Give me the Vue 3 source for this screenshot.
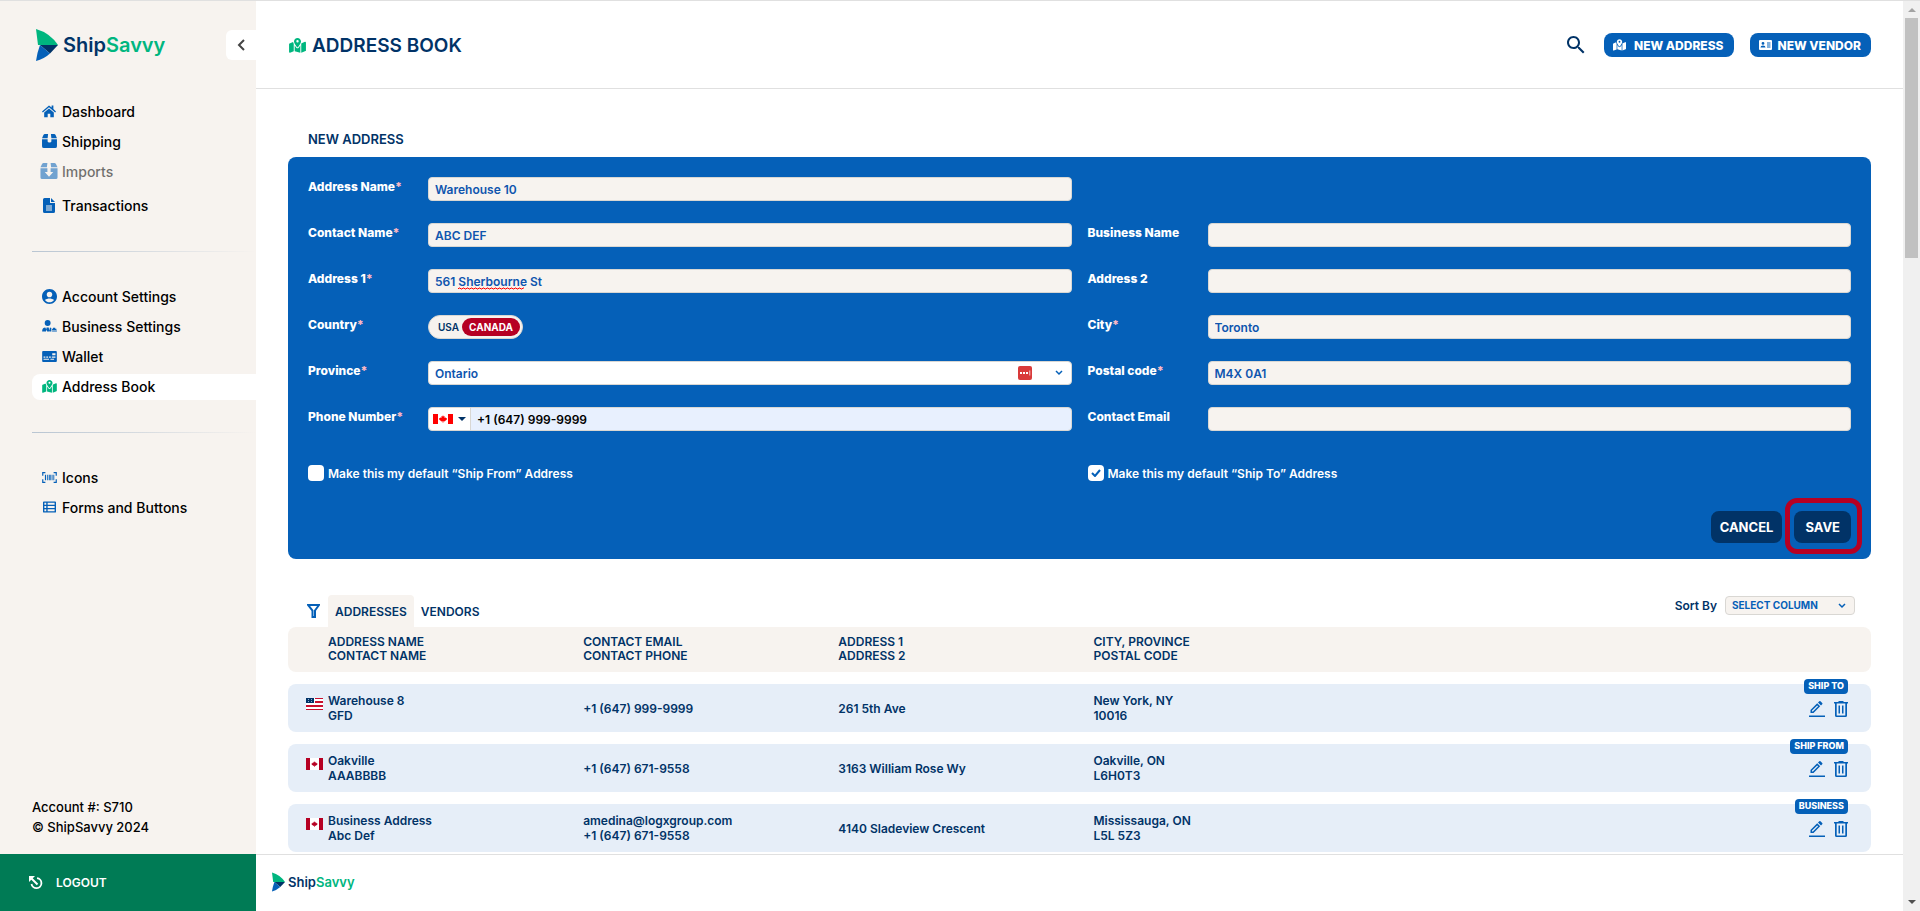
<script setup>
import { ref } from 'vue'

const MAP =
  'M408 120c0 54.6-73.1 151.9-105.2 192c-7.7 9.6-22 9.6-29.6 0C241.1 271.9 168 174.6 168 120C168 53.7 221.7 0 288 0s120 53.7 120 120zm8 80.4c3.5-6.9 6.7-13.8 9.6-20.6c.5-1.2 1-2.5 1.5-3.7l116-46.4C558.9 123.4 576 135 576 152V422.8c0 9.8-6 18.6-15.1 22.3L416 503V200.4zM137.6 138.3c2.4 14.1 7.2 28.3 12.8 41.5c2.9 6.8 6.1 13.7 9.6 20.6V451.8L32.9 502.7C17.1 509 0 497.4 0 480.4V209.6c0-9.8 6-18.6 15.1-22.3l122.6-49zM327.8 332c13.9-17.4 35.7-45.7 56.2-77V504.3L192 449.4V255c20.5 31.3 42.3 59.6 56.2 77c20.5 25.6 59.1 25.6 79.6 0zM288 152a40 40 0 1 0 0-80 40 40 0 1 0 0 80z'
const LEAF =
  'M8 0l1 3 2-1 0 4 2-2 0 2 3 0-1 2 1 1-4 3 0 1-3-1 0 3-2 0 0-3-3 1 0-1-4-3 1-1-1-2 3 0 0-2 2 2 0-4 2 1z'

const icons = {
  home: { box: '0 0 16 14', w: 14, h: 13, d: 'M8 0L0 7l1 1 7-6 7 6 1-1-3-3V0h-2v2.500zM8 3.500L2.500 8v5.500h4V9.500h3v4h4V8z' },
  box: { box: '0 0 16 15', w: 15, h: 14, d: 'M3 0h3.500L6 4.500H0L1.500 1Q2 0 3 0zM9.500 0H13q1 0 1.500 1L16 4.500h-6zM0 5.500h6V8q0 1 2 1t2-1V5.500h6V13q0 2-2 2H2q-2 0-2-2z' },
  imports: { box: '0 0 16 15', w: 18, h: 16, d: 'M3 0h3.500L6 4H0L1.500 1Q2 0 3 0zM9.500 0H13q1 0 1.500 1L16 4h-6zM0 5h6.500v3.500H4L8 13l4-4.500H9.500V5H16v8.500q0 1.500-1.500 1.500h-13Q0 15 0 13.500z' },
  file: { box: '0 0 12 15', w: 12, h: 15, d: 'M1.500 0H7v5h5v8.500q0 1.500-1.500 1.500h-9Q0 15 0 13.500v-12Q0 0 1.500 0zM8 0l4 4H8zM3 7.500v1h6v-1zM3 9.500v1h6v-1zM3 11.500v1h6v-1z' },
  account: { box: '2 2 20 20', w: 15, h: 15, d: 'M12 2C6.480 2 2 6.480 2 12s4.480 10 10 10 10-4.480 10-10S17.520 2 12 2zm0 3.500c2.200 0 3.700 1.600 3.700 3.700S14.200 13 12 13 8.300 11.400 8.300 9.200 9.800 5.500 12 5.500zm0 14.300c-2.300 0-4.600-1-6-3.100 1.500-1.300 3.700-2 6-2s4.500.7 6 2c-1.400 2.100-3.700 3.100-6 3.100z' },
  business: { box: '0 0 16 13', w: 15, h: 12, d: 'M6 0a3 3 0 0 1 0 6.400A3 3 0 0 1 6 0zM0 12.500q0-4.500 3.500-4.500L5.500 12.500zM4.800 8h2.400l.6 4.500H4.200zM8.500 8q.8 0 1.500.6V12.500H7.500zM10.800 9.500h1V8.300h2.400v1.200h1.300v1.200h-4.700zM10.800 11.300H16v1.200h-5.200z' },
  wallet: { box: '0 0 16 12', w: 15, h: 11, d: 'M1 0h14q1 0 1 1v10q0 1-1 1H1q-1 0-1-1V1q0-1 1-1zM11 2.500v2.200h3.500V2.500zM1.500 6v1.300h2V6zM4.500 6v1.300h2V6zM7.500 6v1.300h2V6zM10.500 6v1.300h4V6zM1.500 8.500v1h6v-1zM9 8.500v1h4v-1z' },
  map: { box: '0 0 576 512', w: 15, h: 13, d: MAP },
  barcode: { box: '0 0 16 12', w: 15, h: 11, d: 'M0 0h3.500v1.300H1.300V4H0zM12.500 0H16v4h-1.300V1.300h-2.200zM0 8h1.300v2.700h2.200V12H0zM14.700 8H16v4h-3.500v-1.300h2.200zM3 3h1.300v6H3zM5.500 3h1.200v6H5.500zM7.700 3h1.600v6H7.700zM10.300 3h1v6h-1zM12.200 3h1v6h-1z' },
  list: { box: '0 0 14 12', w: 13, h: 12, d: 'M1 0h12q1 0 1 1v10q0 1-1 1H1q-1 0-1-1V1q0-1 1-1zM1.500 1.500v2h2v-2zM5 1.500v2h7.500v-2zM1.500 5v2h2V5zM5 5v2h7.500V5zM1.500 8.500v2h2v-2zM5 8.500v2h7.500v-2z' },
}

const groups = [
  [
    { text: 'Dashboard', icon: 'home' },
    { text: 'Shipping', icon: 'box' },
    { text: 'Imports', icon: 'imports', muted: true },
    { text: 'Transactions', icon: 'file' },
  ],
  [
    { text: 'Account Settings', icon: 'account' },
    { text: 'Business Settings', icon: 'business' },
    { text: 'Wallet', icon: 'wallet' },
    { text: 'Address Book', icon: 'map', active: true },
  ],
  [
    { text: 'Icons', icon: 'barcode' },
    { text: 'Forms and Buttons', icon: 'list' },
  ],
]

const form = ref({
  name: 'Warehouse 10',
  contact: 'ABC DEF',
  business: '',
  address1: '561 Sherbourne St',
  address2: '',
  country: 'CANADA',
  city: 'Toronto',
  province: 'Ontario',
  postal: 'M4X 0A1',
  phone: '+1 (647) 999-9999',
  email: '',
  shipFrom: false,
  shipTo: true,
})

const fields = [
  { id: 'name', label: 'Address Name', required: true, wide: true },
  { id: 'contact', label: 'Contact Name', required: true },
  { id: 'business', label: 'Business Name' },
  { id: 'address1', label: 'Address 1', required: true },
  { id: 'address2', label: 'Address 2' },
  { id: 'country', label: 'Country', required: true },
  { id: 'city', label: 'City', required: true },
  { id: 'province', label: 'Province', required: true },
  { id: 'postal', label: 'Postal code', required: true },
  { id: 'phone', label: 'Phone Number', required: true },
  { id: 'email', label: 'Contact Email' },
]

const heads = [
  ['ADDRESS NAME', 'CONTACT NAME'],
  ['CONTACT EMAIL', 'CONTACT PHONE'],
  ['ADDRESS 1', 'ADDRESS 2'],
  ['CITY, PROVINCE', 'POSTAL CODE'],
]
const rows = [
  { flag: 'us', tag: 'SHIP TO', cells: [['Warehouse 8', 'GFD'], ['+1 (647) 999-9999'], ['261 5th Ave'], ['New York, NY', '10016']] },
  { flag: 'ca', tag: 'SHIP FROM', cells: [['Oakville', 'AAABBBB'], ['+1 (647) 671-9558'], ['3163 William Rose Wy'], ['Oakville, ON', 'L6H0T3']] },
  { flag: 'ca', tag: 'BUSINESS', cells: [['Business Address', 'Abc Def'], ['amedina@logxgroup.com', '+1 (647) 671-9558'], ['4140 Sladeview Crescent'], ['Mississauga, ON', 'L5L 5Z3']] },
]
</script>

<template>
  <div class="app">
    <aside class="side">
      <div class="side-top">
        <div class="logo">
          <svg class="mark" viewBox="0 0 22 32" aria-hidden="true">
            <path d="M0 0Q14 4 22 16H2Q1 8 0 0z" fill="#00b67f" />
            <path d="M4 16h18l-8 8.500z" fill="#013367" />
            <path d="M4 16l10 8.500Q8 30 0 32 1 24 4 16z" fill="#0560b8" />
          </svg>
          <span>Ship<b>Savvy</b></span>
        </div>
        <button class="collapse" aria-label="Collapse menu">
          <svg width="8" height="12" viewBox="0 0 8 12"><path d="M7 1L2 6l5 5" fill="none" stroke="#444" stroke-width="2" /></svg>
        </button>
      </div>
      <nav>
        <div v-for="(group, g) in groups" :key="g" class="group">
          <a v-for="item in group" :key="item.text" href="#" class="item" :class="{ active: item.active, muted: item.muted }">
            <span class="ico">
              <svg :width="icons[item.icon].w" :height="icons[item.icon].h" :viewBox="icons[item.icon].box" aria-hidden="true">
                <path :d="icons[item.icon].d" fill="currentColor" fill-rule="evenodd" />
              </svg>
            </span>
            {{ item.text }}
          </a>
        </div>
      </nav>
      <div class="info">
        <div>Account #: S710</div>
        <div>© ShipSavvy 2024</div>
      </div>
      <button class="logout">
        <svg width="14" height="14" viewBox="0 0 14 14" fill="none" stroke="currentColor" aria-hidden="true">
          <path d="M8 2.200A5 5 0 1 1 2.500 8" stroke-width="1.800" />
          <path d="M1 1l7.500 7.500" stroke-width="2" />
          <path d="M0 0h6L0 6z" fill="currentColor" stroke="none" />
        </svg>
        LOGOUT
      </button>
    </aside>

    <div class="main">
      <header class="head">
        <h1>
          <svg width="17" height="15" viewBox="0 0 576 512" aria-hidden="true"><path :d="MAP" fill="#00b67f" /></svg>
          ADDRESS BOOK
        </h1>
        <div class="head-actions">
          <button class="search" aria-label="Search">
            <svg width="24" height="24" viewBox="0 0 24 24">
              <path fill="#013367" d="M15.500 14h-.79l-.28-.27C15.410 12.590 16 11.110 16 9.500 16 5.910 13.090 3 9.500 3S3 5.910 3 9.500 5.910 16 9.500 16c1.610 0 3.090-.59 4.230-1.570l.27.28v.79l5 4.990L20.490 19l-4.990-5zm-6 0C7.010 14 5 11.990 5 9.500S7.010 5 9.500 5 14 7.010 14 9.500 11.990 14 9.500 14z" />
            </svg>
          </button>
          <button class="pill address">
            <svg width="13" height="12" viewBox="0 0 576 512" aria-hidden="true"><path :d="MAP" fill="#fff" /></svg>
            NEW ADDRESS
          </button>
          <button class="pill vendor">
            <svg width="13" height="10" viewBox="0 0 13 10" aria-hidden="true">
              <path fill="#fff" fill-rule="evenodd" d="M1 0h11q1 0 1 1v8q0 1-1 1H1Q0 10 0 9V1q0-1 1-1zM4 2a1.400 1.400 0 0 0 0 2.800A1.400 1.400 0 0 0 4 2zM1.500 7.500h5Q6.500 5.500 4 5.500T1.500 7.500zM8 2.500v1h3.500v-1zM8 4.500v1h3.500v-1zM8 6.500v1h3.500v-1z" />
            </svg>
            NEW VENDOR
          </button>
        </div>
      </header>

      <main class="content">
        <h2>NEW ADDRESS</h2>
        <form class="panel" @submit.prevent>
          <div class="fields">
            <div v-for="f in fields" :key="f.id" class="field" :class="{ solo: f.wide }">
              <label :for="f.id" class="label">{{ f.label }}<i v-if="f.required">*</i></label>
              <div v-if="f.id === 'country'" class="switch" role="radiogroup" aria-label="Country">
                <label v-for="c in ['USA', 'CANADA']" :key="c" :class="{ on: form.country === c }">
                  <input :id="c === 'CANADA' ? 'country' : 'country-usa'" v-model="form.country" type="radio" name="country" :value="c" />{{ c }}
                </label>
              </div>
              <div v-else-if="f.id === 'province'" class="control">
                <select id="province" v-model="form.province" class="input white"><option>Ontario</option></select>
                <svg class="vault" width="14" height="14" viewBox="0 0 14 14" aria-hidden="true">
                  <rect width="14" height="14" rx="2" fill="#d93a3a" />
                  <path d="M2 6h2v2H2zM5 6h2v2H5zM8 6h2v2H8zM11.500 4.500h.7v5h-.7z" fill="#fff" />
                </svg>
                <svg class="chev" width="8" height="6" viewBox="0 0 8 6" aria-hidden="true"><path d="M1 1l3 3 3-3" fill="none" stroke="#0560b8" stroke-width="1.500" /></svg>
              </div>
              <div v-else-if="f.id === 'phone'" class="control phone">
                <button type="button" class="dial" aria-label="Country code">
                  <svg width="20" height="10" viewBox="0 0 20 10" aria-hidden="true">
                    <path d="M0 0h5v10H0zM15 0h5v10h-5z" fill="#f00" />
                    <svg x="6" y="1" width="8" height="8" viewBox="0 0 16 16"><path :d="LEAF" fill="#f00" /></svg>
                  </svg>
                  <svg width="8" height="4" viewBox="0 0 8 4" aria-hidden="true"><path d="M0 0h8L4 4z" fill="#013367" /></svg>
                </button>
                <input id="phone" v-model="form.phone" class="input auto" type="tel" />
              </div>
              <div v-else class="control">
                <input :id="f.id" v-model="form[f.id]" class="input" type="text" />
                <svg v-if="f.id === 'address1'" class="squiggle" width="66" height="3" viewBox="0 0 66 3" aria-hidden="true">
                  <path :d="'M0 2' + 'l1-1 1 0 1 1 1 0'.repeat(17)" fill="none" stroke="#f00" />
                </svg>
              </div>
            </div>
          </div>
          <div class="checks">
            <label class="check"><input v-model="form.shipFrom" type="checkbox" />Make this my default “Ship From” Address</label>
            <label class="check"><input v-model="form.shipTo" type="checkbox" />Make this my default “Ship To” Address
              <svg v-if="form.shipTo" class="tick" width="10" height="8" viewBox="0 0 10 8" aria-hidden="true"><path d="M1 4l3 3 5-6" fill="none" stroke="#0560b8" stroke-width="2" /></svg>
            </label>
          </div>
          <div class="buttons">
            <button type="button" class="dark">CANCEL</button>
            <div class="save"><button class="dark">SAVE</button><span class="ring"></span></div>
          </div>
        </form>

        <div class="bar">
          <button class="filter" aria-label="Filter">
            <svg width="13" height="14" viewBox="0 0 13 14"><path d="M1 1h11L8 6.500V13H5.500V6.500z" fill="none" stroke="#0560b8" stroke-width="2" /></svg>
          </button>
          <button class="tab on">ADDRESSES</button>
          <button class="tab">VENDORS</button>
          <div class="sort">
            <label for="sort">Sort By</label>
            <div class="control">
              <select id="sort" class="input small"><option>SELECT COLUMN</option></select>
              <svg class="chev" width="8" height="6" viewBox="0 0 8 6" aria-hidden="true"><path d="M1 1l3 3 3-3" fill="none" stroke="#0560b8" stroke-width="1.500" /></svg>
            </div>
          </div>
        </div>

        <table>
          <colgroup><col class="c-flag" /><col span="6" /><col class="c-end" /></colgroup>
          <thead>
            <tr>
              <th></th>
              <th v-for="h in heads" :key="h[0]" scope="col"><div v-for="l in h" :key="l">{{ l }}</div></th>
              <th colspan="3"></th>
            </tr>
          </thead>
          <tbody>
            <tr v-for="r in rows" :key="r.tag">
              <td class="flag">
                <svg v-if="r.flag === 'us'" width="17" height="12" viewBox="0 0 17 12" role="img" aria-label="USA">
                  <rect width="17" height="12" fill="#fff" />
                  <path d="M9 0h8v1H9zM9 3h8v2H9zM0 7h17v2H0zM0 11h17v1H0z" fill="#c8102e" />
                  <path d="M0 0h8v5H0z" fill="#013367" />
                  <path d="M2 1h1v1H2zM5 1h1v1H5zM2 3h1v1H2zM5 3h1v1H5z" fill="#8fb0d4" />
                </svg>
                <svg v-else width="17" height="12" viewBox="0 0 17 12" role="img" aria-label="Canada">
                  <rect width="17" height="12" fill="#fff" />
                  <path d="M0 0h4v12H0zM13 0h4v12h-4z" fill="#b60023" />
                  <svg x="5" y="3" width="7" height="6" viewBox="0 0 16 16"><path :d="LEAF" fill="#b60023" /></svg>
                </svg>
              </td>
              <td v-for="(c, i) in r.cells" :key="i"><div v-for="l in c" :key="l">{{ l }}</div></td>
              <td colspan="3" class="actions">
                <span class="tag">{{ r.tag }}</span>
                <div class="tools">
                  <button aria-label="Edit">
                    <svg width="16" height="16" viewBox="0 0 16 16">
                      <path fill="#0560b8" fill-rule="evenodd" d="M0 14.500h16V16H0zM1.500 12V9l6.700-6.700 3 3L4.500 12zM3 10.500h.9L9.100 5.300l-.9-.9L3 9.600zM9 1.500L10.300.3q.6-.6 1.200 0l1.700 1.700q.6.6 0 1.200L12 4.500z" />
                    </svg>
                  </button>
                  <button aria-label="Delete">
                    <svg width="14" height="16" viewBox="0 0 14 16">
                      <path fill="#0560b8" fill-rule="evenodd" d="M4.500 0h5v1H14v1.600h-1V14.500q0 1.500-1.500 1.500h-9Q1 16 1 14.500V2.600H0V1h4.500zM2.700 2.600v11.800h8.600V2.600zM4.500 4.500H6v8H4.500zM8 4.500h1.500v8H8z" />
                    </svg>
                  </button>
                </div>
              </td>
            </tr>
          </tbody>
        </table>
      </main>

      <footer class="foot">
        <div class="logo mini">
          <svg class="mark" viewBox="0 0 22 32" aria-hidden="true">
            <path d="M0 0Q14 4 22 16H2Q1 8 0 0z" fill="#00b67f" />
            <path d="M4 16h18l-8 8.500z" fill="#013367" />
            <path d="M4 16l10 8.500Q8 30 0 32 1 24 4 16z" fill="#0560b8" />
          </svg>
          <span>Ship<b>Savvy</b></span>
        </div>
      </footer>
    </div>

    <div class="scroll" aria-hidden="true">
      <svg width="8" height="4" viewBox="0 0 8 4"><path d="M0 4h8L4 0z" fill="#a3a3a3" /></svg>
      <div class="thumb"></div>
      <svg class="down" width="8" height="4" viewBox="0 0 8 4"><path d="M0 0h8L4 4z" fill="#505050" /></svg>
    </div>
  </div>
</template>

<style>
body {
  margin: 0;
}
</style>

<style scoped>
* {
  box-sizing: border-box;
}
.app {
  display: grid;
  grid-template-columns: 256px 1fr 17px;
  height: 100vh;
  border-top: 1px solid #e0e0e0;
  background: #fff;
  color: #013367;
  font: 600 12px/15px Inter, 'Open Sans', sans-serif;
}
button {
  border: 0;
  padding: 0;
  background: none;
  color: inherit;
  font: inherit;
}
svg {
  display: block;
  flex: none;
}
.side {
  display: flex;
  flex-direction: column;
  min-width: 0;
  background: #f7f3ef;
  color: #000;
  font-weight: 500;
}
.side-top {
  display: flex;
  align-items: center;
  justify-content: space-between;
  height: 60px;
  margin-bottom: 38px;
  padding: 28px 0 0 36px;
}
.logo {
  display: flex;
  align-items: center;
  gap: 5px;
  color: #013367;
  font-size: 20px;
  line-height: 32px;
  font-weight: 600;
}
.logo b {
  color: #00b67f;
  font-weight: 600;
}
.mark {
  width: 22px;
  height: 32px;
}
.mini {
  font-size: 13px;
  line-height: 20px;
  gap: 3px;
}
.mini .mark {
  width: 13px;
  height: 20px;
}
.collapse {
  display: flex;
  align-items: center;
  justify-content: center;
  width: 30px;
  height: 30px;
  border-radius: 6px 0 0 6px;
  background: #fff;
}
nav {
  padding-left: 32px;
}
.group + .group {
  margin-top: 32px;
}
.group + .group::before {
  content: '';
  display: block;
  height: 1px;
  margin-bottom: 32px;
  background: linear-gradient(90deg, #b9c5d2, #f7f3ef);
}
.item {
  display: flex;
  align-items: center;
  gap: 4px;
  height: 26px;
  padding: 0 0 2px 8px;
  border-radius: 8px 0 0 8px;
  color: #000;
  font-size: 14px;
  text-decoration: none;
}
.item + .item {
  margin-top: 4px;
}
.item.muted {
  opacity: 0.55;
}
.item.muted + .item {
  margin-top: 8px;
}
.item.active {
  background: #fff;
}
.ico {
  display: flex;
  justify-content: center;
  width: 18px;
  color: #0560b8;
}
.active .ico {
  color: #00b67f;
}
.info {
  margin-top: auto;
  padding: 0 0 17px 32px;
  font-size: 13px;
  line-height: 20px;
}
.logout {
  display: flex;
  align-items: center;
  gap: 13px;
  height: 57px;
  padding-left: 29px;
  background: #007b55;
  color: #fff;
  font-weight: 600;
}
.main {
  display: flex;
  flex-direction: column;
  min-width: 0;
  min-height: 0;
}
.head {
  display: flex;
  flex: none;
  justify-content: space-between;
  height: 88px;
  padding: 32px 32px 0 33px;
  border-bottom: 1px solid #e0e0e0;
}
h1 {
  display: flex;
  gap: 6px;
  align-items: center;
  height: 24px;
  margin: 0;
  font-size: 19px;
  font-weight: 600;
}
.head-actions {
  display: flex;
  gap: 16px;
  height: 24px;
}
.pill {
  display: flex;
  align-items: center;
  height: 24px;
  padding: 0 10px 0 9px;
  border-radius: 8px;
  background: #0560b8;
  color: #fff;
  font-weight: 800;
}
.address {
  gap: 8px;
}
.vendor {
  gap: 6px;
}
.content {
  flex: 1;
  min-height: 0;
  overflow: hidden;
  padding: 40px 32px 0;
}
h2 {
  margin: 0 20px 8px;
  font-size: 13px;
  line-height: 20px;
  font-weight: 600;
}
.panel {
  padding: 20px 20px 16px;
  border-radius: 8px;
  background: #0560b8;
  color: #fff;
}
.fields {
  display: grid;
  grid-template-columns: 1fr 1fr;
  gap: 22px 16px;
}
.field {
  display: grid;
  grid-template-columns: 120px 1fr;
  height: 24px;
}
.field.solo {
  margin-right: calc(50% + 8px);
  grid-column: 1 / -1;
}
.label {
  line-height: 20px;
  font-weight: 800;
}
.label i {
  color: #ffb9c4;
  font-style: normal;
}
.control {
  position: relative;
  display: flex;
  min-width: 0;
}
.input {
  appearance: none;
  flex: 1;
  min-width: 0;
  height: 24px;
  margin: 0;
  padding: 0 6px;
  border: 1px solid #d9d7d3;
  border-radius: 4px;
  background: #f7f3ef;
  color: #0f55ae;
  font: inherit;
  outline: 0;
}
.input.white {
  background: #fff;
}
.input.auto {
  border-radius: 0 4px 4px 0;
  background: #e8f0fe;
  color: #000;
}
.input.small {
  width: 130px;
  height: 19px;
  font-size: 10px;
  font-weight: 700;
  color: #0560b8;
}
.chev {
  position: absolute;
  right: 9px;
  top: 50%;
  margin-top: -3px;
}
.vault {
  position: absolute;
  right: 40px;
  top: 5px;
}
.squiggle {
  position: absolute;
  left: 30px;
  bottom: 3px;
}
.dial {
  display: flex;
  align-items: center;
  justify-content: center;
  gap: 5px;
  width: 43px;
  margin-right: -1px;
  border: 1px solid #d9d7d3;
  border-radius: 4px 0 0 4px;
  background: #fff;
}
.switch {
  display: flex;
  justify-self: start;
  padding: 2px;
  border: 1px solid #d9d7d3;
  border-radius: 12px;
  background: #f7f3ef;
  color: #013367;
  font-size: 10px;
  line-height: 18px;
}
.switch label {
  padding: 0 3px 0 7px;
}
.switch label.on {
  padding: 0 7px;
  border-radius: 9px;
  background: #b60023;
  color: #fff;
  font-weight: 700;
}
.switch input {
  position: absolute;
  opacity: 0;
  pointer-events: none;
}
.checks {
  display: grid;
  grid-template-columns: 1fr 1fr;
  gap: 16px;
  margin-top: 34px;
}
.check {
  position: relative;
  display: flex;
  align-items: center;
  gap: 4px;
  height: 16px;
}
.check input {
  appearance: none;
  width: 16px;
  height: 16px;
  margin: 0;
  border-radius: 4px;
  background: #fff;
}
.tick {
  position: absolute;
  left: 3px;
  top: 4px;
}
.buttons {
  display: flex;
  justify-content: flex-end;
  gap: 12px;
  margin-top: 30px;
}
.dark {
  display: block;
  height: 32px;
  padding: 0 9px;
  border-radius: 8px;
  background: #013367;
  color: #fff;
  font-size: 13px;
  font-weight: 700;
}
.save {
  position: relative;
}
.save .dark {
  padding: 0 11px;
}
.ring {
  position: absolute;
  inset: -13px -11px -11px -9px;
  border: 5px solid #b60023;
  border-radius: 12px;
  pointer-events: none;
}
.bar {
  display: flex;
  height: 32px;
  margin-top: 36px;
  padding: 0 16px 0 19px;
}
.filter {
  display: flex;
  align-items: center;
  width: 21px;
}
.tab {
  padding: 0 7px;
  border-radius: 4px 4px 0 0;
  font-weight: 600;
}
.tab.on {
  background: #f7f3ef;
}
.sort {
  display: flex;
  align-items: center;
  gap: 8px;
  height: 21px;
  margin-left: auto;
}
table {
  width: 100%;
  margin-top: -12px;
  table-layout: fixed;
  border-collapse: separate;
  border-spacing: 0 12px;
}
.c-flag {
  width: 40px;
}
.c-end {
  width: 12px;
}
th,
td {
  padding: 0;
  text-align: left;
  font-weight: 600;
}
th {
  height: 45px;
  padding-bottom: 2px;
  background: #f7f3ef;
  line-height: 14px;
}
td {
  height: 48px;
  background: #e6eef8;
}
th:first-child,
td:first-child {
  border-radius: 8px 0 0 8px;
}
th:last-child,
td:last-child {
  border-radius: 0 8px 8px 0;
}
.flag {
  padding: 0 0 9px 18px;
}
.actions {
  position: relative;
}
.tag {
  position: absolute;
  top: -5px;
  right: 23px;
  height: 15px;
  padding: 0 4px;
  border-radius: 4px;
  background: #0560b8;
  color: #fff;
  font-size: 9px;
  line-height: 14px;
  font-weight: 800;
}
.tools {
  display: flex;
  justify-content: flex-end;
  gap: 9px;
  padding: 2px 23px 0 0;
}
.foot {
  display: flex;
  flex: none;
  align-items: center;
  height: 57px;
  padding: 0 16px 3px;
  border-top: 1px solid #e0e0e0;
}
.scroll {
  display: flex;
  flex-direction: column;
  align-items: center;
  padding: 7px 0;
  background: #f0f0f0;
}
.thumb {
  width: 13px;
  height: 240px;
  margin-top: 6px;
  background: #c1c1c1;
}
.down {
  margin-top: auto;
}
</style>
